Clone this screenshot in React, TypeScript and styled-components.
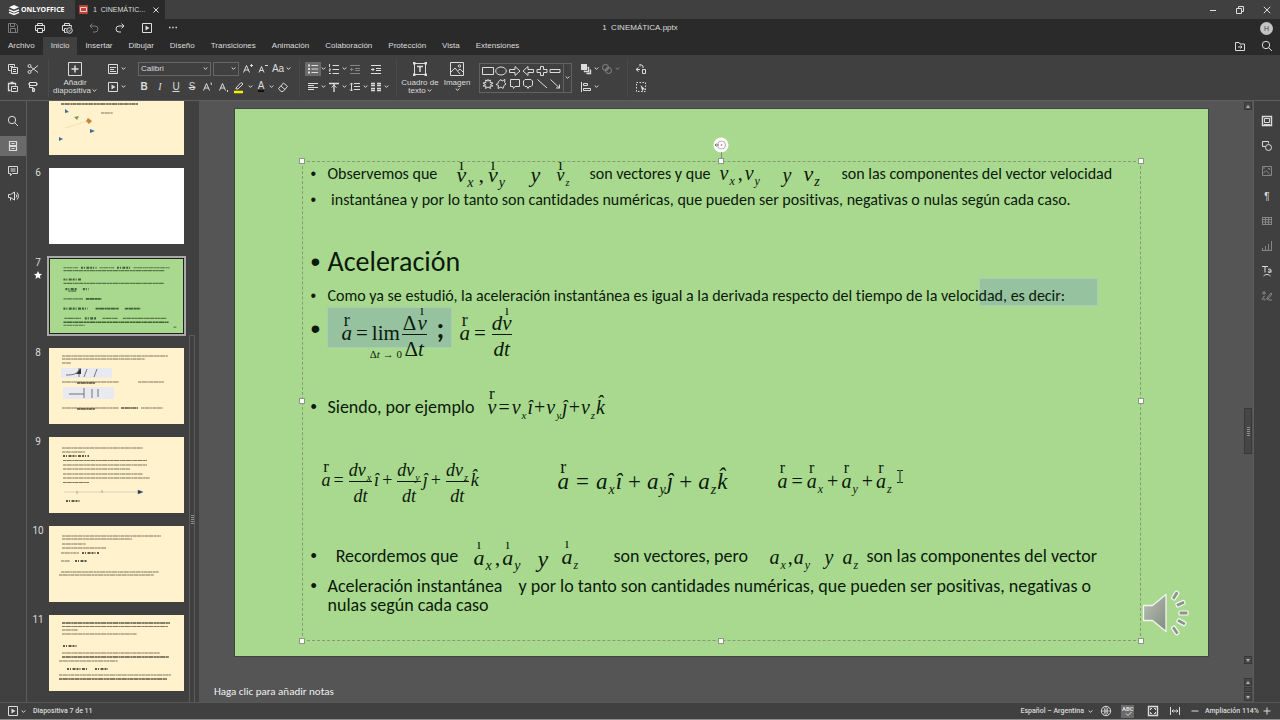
import React from 'react';
import styled, { createGlobalStyle, css } from 'styled-components';

const GlobalStyle = createGlobalStyle`
  *, *::before, *::after { box-sizing: border-box; }
  html, body, #root { height: 100%; }
  body {
    margin: 0;
    background: #404040;
    color: #dcdcdc;
    font-family: 'Liberation Sans', Arial, sans-serif;
    font-size: 8px;
    line-height: 8px;
    overflow: hidden;
  }
  button, select, input { font: inherit; color: inherit; }
  ul, ol { list-style: none; margin: 0; padding: 0; }
`;

const SLIDE_FONT = "Carlito, Lato, sans-serif";
const MATH_FONT = "'Liberation Serif', 'Times New Roman', serif";

/* ---------- icons ---------- */

const Svg = styled.svg<{ $dim?: boolean }>`
  display: block;
  flex: none;
  fill: none;
  stroke: currentColor;
  opacity: ${p => (p.$dim ? 0.45 : 1)};
`;

type IconProps = { size?: number; dim?: boolean; children: React.ReactNode };
const Icon = ({ size = 12, dim, children }: IconProps) => (
  <Svg width={size} height={size} viewBox={`0 0 ${size} ${size}`} $dim={dim} aria-hidden="true">
    {children}
  </Svg>
);

const Chevron = ({ dim }: { dim?: boolean }) => (
  <Svg width="5" height="5" viewBox="0 0 5 5" $dim={dim} aria-hidden="true">
    <path d="M.7 1.5 2.5 3.3 4.3 1.5" />
  </Svg>
);

const icons = {
  logo: (
    <Icon>
      <path d="M1 3.2 6 1l5 2.2L6 5.4z" fill="currentColor" stroke="none" />
      <path d="m1 5.8 5 2.2 5-2.2M1 8.3l5 2.2 5-2.2" strokeWidth="1.4" />
    </Icon>
  ),
  save: <Icon dim><path d="M1.5 1.5h7l2 2v7h-9zM3.5 1.5v3h4v-3M3.5 10.5v-4h5v4" /></Icon>,
  print: <Icon><path d="M3.5 3.5v-2h5v2M3.5 8.5h-2v-5h9v5h-2M3.5 6.5h5v4h-5z" /></Icon>,
  quickPrint: (
    <Icon>
      <path d="M3.5 3.5v-2h5v2M3.5 8.5h-2v-5h9v2M3.5 6.5h2M3.5 6.5v4h2" />
      <circle cx="8.5" cy="8.5" r="2.8" />
      <path d="m7.2 8.5 1 1 1.7-2" />
    </Icon>
  ),
  undo: <Icon dim><path d="M4.5 1.5 2 4l2.5 2.5M2 4h5a3 3 0 0 1 0 6H5" /></Icon>,
  redo: <Icon><path d="M7.5 1.5 10 4 7.5 6.5M10 4H5a3 3 0 0 0 0 6h2" /></Icon>,
  play: <Icon><path d="M1.5 1.5h9v9h-9z" /><path d="m4.5 3.5 4 2.5-4 2.5z" fill="currentColor" stroke="none" /></Icon>,
  more: <Icon><path d="M2 5.5h1.5M5.2 5.5h1.5M8.5 5.5H10" strokeWidth="1.5" /></Icon>,
  copy: <Icon><path d="M3.5 7.5h-2v-6h6v2M3 3.5h3" /><path d="M4.5 4.5h6v6h-6zM6 6.5h3M6 8.5h3" /></Icon>,
  paste: <Icon><path d="M3.5 9.5h-2v-7h7v2M3.5 1.5h3" strokeWidth="1.3" /><path d="M4.5 5.5h6v5h-6zM6 7.5h3" /></Icon>,
  cut: <Icon><circle cx="2.5" cy="3" r="1.5" /><circle cx="2.5" cy="9" r="1.5" /><path d="M4 4 11 9.5M4 8l7-5.5" /></Icon>,
  brush: <Icon><path d="M2.5 1.5h7v3h-7zM9.5 3h1.5M1 3h1.5v3.5H6v4" /><path d="M5.5 7.5h2v3h-2z" /></Icon>,
  addSlide: <Icon size={16}><path d="M1.5 1.5h13v13h-13z" /><path d="M8 4.5v7M4.5 8h7" strokeWidth="1.5" /></Icon>,
  layout: <Icon><path d="M1.5 1.5h9v9h-9zM3 4.5h6M3 6.5h4M3 8.5h6" /></Icon>,
  grow: <Icon><path d="m1.5 9.5 3-7 3 7M2.5 7h4M9.5 1v3M8 2.5h3" /></Icon>,
  shrink: <Icon><path d="m2 9.5 2.5-6 2.5 6M3 7.5h3M8 2.5h3" /></Icon>,
  sup: <Icon><path d="m1.5 9.5 3-7 3 7M2.5 7h4M9 1.5l.5 2.5" /></Icon>,
  sub: <Icon><path d="m1.5 9.5 3-7 3 7M2.5 7h4M9.5 9v2" /></Icon>,
  eraser: <Icon><path d="M1.5 7.5 6.5 2l4 3.5-4.5 5H4zM4 5l4 3.5" /></Icon>,
  pen: <Icon size={14}><path d="m3 8 5-5.5 2 1.5-5 5H3z" /><path d="M1 12h9" stroke="#f4f000" strokeWidth="2.5" /></Icon>,
  bullets: <Icon><path d="M1 2.5h2M1 6h2M1 9.5h2" strokeWidth="1.8" /><path d="M4.5 2.5H11M4.5 6H11M4.5 9.5H11" /></Icon>,
  numbers: <Icon><path d="M1.5 1v3M1 6h1.5L1 8h1.5M1 10.5h2M4.5 2.5H11M4.5 6.5H11M4.5 10.5H11" /></Icon>,
  outdent: <Icon dim><path d="M1 2.5h10M6 5.5h5M6 7.5h5M1 10.5h10M4.5 6.5h-3M3 5 1.5 6.5 3 8" /></Icon>,
  indent: <Icon><path d="M1 2.5h10M6 5.5h5M6 7.5h5M1 10.5h10M1 6.5h3M2.5 5 4 6.5 2.5 8" /></Icon>,
  alignLeft: <Icon><path d="M1 2.5h10M1 4.5h6M1 6.5h10M1 8.5h6" /></Icon>,
  alignTop: <Icon><path d="M1 2.5h10M6 3v8" strokeWidth="1.4" /><path d="M3.5 6.5 6 4.2l2.5 2.3" /></Icon>,
  spacing: <Icon><path d="M5 2.5h6M5 5.5h6M5 8.5h6M2.5 2v8M1 3.5 2.5 2 4 3.5M1 8.5 2.5 10 4 8.5" /></Icon>,
  columns: <Icon><path d="M1 2.5h4M1 4.5h4M7 2.5h4M7 4.5h4M1 7.5h4M1 9.5h4M7 7.5h4M7 9.5h4" strokeWidth="1.5" /></Icon>,
  textbox: (
    <Icon size={16}>
      <path d="M2.5 2.5h11v11h-11z" /><path d="M1 1h2.5v2.5H1zM12.5 1H15v2.5h-2.5zM1 12.5h2.5V15H1zM12.5 12.5H15V15h-2.5z" fill="currentColor" stroke="none" />
      <path d="M5 5.5h6M8 5.5V11" strokeWidth="1.5" />
    </Icon>
  ),
  image: <Icon size={16}><path d="M1.5 1.5h13v13h-13zM2 11l4-4 5 6M9 9.5l2-1.5 3.5 3.5" /><circle cx="10.5" cy="5" r="1.2" /></Icon>,
  arrange: <Icon><path d="M1 1h6v6H1z" fill="currentColor" stroke="none" /><path d="M7.5 4.5h1v4h-4v-1M10.5 6.5v4h-4" strokeWidth="1.4" /></Icon>,
  merge: <Icon dim><circle cx="4.5" cy="4.5" r="3" /><circle cx="7.5" cy="7.5" r="3" /><path d="m4.5 6 1.5 1.5M6 4.5 7.5 6" /></Icon>,
  alignObj: <Icon><path d="M1.5 1v10M3.5 2.5h4v2h-4zM3.5 7.5h7v2h-7z" /></Icon>,
  replace: <Icon><path d="M3.5 8.5 1 6.5l2.5-2M1.5 6.5H5M5.5 1.5 8 3v2M7.5 6.5h3v4h-3zM5 1v2.5" /></Icon>,
  select: <Icon><path d="M1.5 1.5h9v9h-9z" strokeDasharray="1.5 1.5" /><path d="m5.5 4 5 4.5H8L7.5 11z" fill="currentColor" stroke="none" /></Icon>,
  folder: <Icon><path d="M1.5 2.5H5L6 4h4.5v6.5h-9zM4 7h4M6.5 5.5 8 7 6.5 8.5" /></Icon>,
  search: <Icon><circle cx="5" cy="5" r="3.7" /><path d="M7.7 7.7 11 11" /></Icon>,
  slides: <Icon><path d="M2.5 1.5h7v4h-7zM2.5 6.5h7v4h-7zM4.5 3.5h3M4.5 8.5h3" strokeWidth="1.2" /></Icon>,
  comment: <Icon><path d="M1.5 1.5h9v7h-5l-2 2v-2h-2zM3.5 4h5M3.5 6h5" /></Icon>,
  speaker: <Icon><path d="M1.5 4.5h2L7.5 2v8L3.5 7.5h-2zM3.5 8v2.5M9 4.5a2 2 0 0 1 0 3M10 2.5a5 5 0 0 1 0 7" /></Icon>,
  slideSet: <Icon><path d="M1.5 1.5h9v9h-9z" strokeWidth="1.4" /><path d="M3.5 3.5h5v4h-5zM3 9.5h6" /></Icon>,
  shapeSet: <Icon><path d="M4.5 6.5h-3v-5h6v2" /><circle cx="7.5" cy="7.5" r="3" /></Icon>,
  imageSet: <Icon dim><path d="M1.5 1.5h9v9h-9zM2 8.5l3-3 4 4M7 3.5h1.5V5M2 3h2" /></Icon>,
  tableSet: <Icon dim><path d="M1 2.5h10M1 4.5h10M1 7h10M1 9.5h10M1.5 2v8M4.5 2v8M7.5 2v8M10.5 2v8" /></Icon>,
  chartSet: <Icon dim><path d="M1 10.5h10M1.5 8v2M4.5 6v4M7.5 4v6M10.5 1v9" /></Icon>,
  artSet: <Icon><path d="M1 1.5h6M4 1.5v6M7 4.5c1.5-1 3-.5 3 .5v2.5M10 6c-3-.5-3.5 1.5-2 1.5.8 0 1.5-.3 2-1M2.5 11c2-2 5-2 7 0" /></Icon>,
  signSet: <Icon dim><path d="M1 3h4M3 1v4M6 8l4-5 1 1-4 5zM1 10c1-3 2-3 2-1s1 1 2 0 2 1 3 1h3M2 7l2-1" /></Icon>,
  globe: <Icon><circle cx="6" cy="6" r="4.7" /><path d="M6 1.3v9.4M1.3 6h9.4M3.5 2.2c1.8 2 1.8 5.600 0 7.6M8.500 2.200c-1.800 2-1.800 5.600 0 7.600" strokeWidth=".8" /></Icon>,
  fitPage: <Icon><path d="M1.5 1.5h9v9h-9z" strokeWidth="1.4" /><path d="M3.5 5V3.5H5M7 3.5h1.5V5M8.5 7v1.5H7M5 8.5H3.5V7" /></Icon>,
  fitWidth: <Icon><path d="M1.5 2v8M10.5 2v8M3 6h6M4.5 4.5 3 6l1.5 1.5M7.5 4.5 9 6 7.5 7.5" /></Icon>,
  minus: <Icon size={8}><path d="M.5 4h7" /></Icon>,
  plus: <Icon size={8}><path d="M.5 4h7M4 .5v7" /></Icon>,
};

/* ---------- shared controls ---------- */

const IconButton = styled.button<{ $w?: number; $active?: boolean }>`
  display: flex;
  align-items: center;
  justify-content: center;
  flex: none;
  width: ${p => p.$w ?? 16}px;
  height: 14px;
  padding: 0;
  border: 0;
  background: ${p => (p.$active ? '#6a6a6a' : 'transparent')};
`;

const MenuArrow = styled(IconButton)`
  width: 5px;
`;

/* ---------- title bar ---------- */

const Shell = styled.div`
  display: flex;
  flex-direction: column;
  height: 100vh;
  border-bottom: 1px solid #8c8c8c;
`;

const TitleBar = styled.header`
  display: flex;
  align-items: stretch;
  flex: none;
  height: 19px;
  background: #404040;
`;

const Brand = styled.div`
  display: flex;
  align-items: center;
  gap: 1px;
  width: 75px;
  padding-left: 8px;
  color: #fff;
  font: 700 7px/8px 'Open Sans', sans-serif;
`;

const FileTab = styled.div`
  display: flex;
  align-items: center;
  min-width: 90px;
  padding-left: 4px;
  background: #2a2a2a;
`;

const FileTabName = styled.span`
  flex: 1;
  margin-left: 5px;
  font-size: 7px;
  white-space: pre;
`;

const WindowButtons = styled.div`
  display: flex;
  align-items: center;
  margin-left: auto;
`;

const Header = styled.div`
  flex: none;
  background: #2a2a2a;
`;

const QuickBar = styled.div`
  display: grid;
  grid-template-columns: 1fr auto 1fr;
  align-items: center;
  height: 18px;
`;

const QuickTools = styled.div`
  display: flex;
`;

const DocTitle = styled.h1`
  margin: 0;
  font: inherit;
  white-space: pre;
`;

const Avatar = styled.button`
  justify-self: end;
  width: 13px;
  height: 13px;
  margin-right: 7px;
  padding: 0;
  border: 0;
  border-radius: 50%;
  background: #c4c4c4;
  color: #444;
  font-size: 7px;
  line-height: 13px;
`;

const Tabs = styled.nav`
  display: flex;
  height: 18px;
`;

const Tab = styled.button<{ $active?: boolean }>`
  height: 18px;
  padding: 0 8px;
  border: 0;
  background: ${p => (p.$active ? '#404040' : 'transparent')};
`;

const TabsRight = styled.div`
  display: flex;
  align-items: center;
  margin-left: auto;
`;

/* ---------- ribbon ---------- */

const Ribbon = styled.div`
  display: flex;
  align-items: center;
  flex: none;
  height: 46px;
  padding-left: 5px;
  border-bottom: 1px solid #5e5e5e;
  background: #404040;
`;

const ToolGroup = styled.div<{ $ml?: number }>`
  display: flex;
  flex-direction: column;
  gap: 4px;
  margin-left: ${p => p.$ml ?? 0}px;
`;

const ToolRow = styled.div<{ $gap?: number; $indent?: number }>`
  display: flex;
  align-items: center;
  gap: ${p => p.$gap ?? 0}px;
  padding-left: ${p => p.$indent ?? 0}px;
`;

const Divider = styled.span`
  width: 1px;
  height: 38px;
  margin: 0 5px 0 7px;
  background: #4a4a4a;
`;

const BigButton = styled.button<{ $w: number }>`
  display: flex;
  flex-direction: column;
  align-items: center;
  gap: 2px;
  width: ${p => p.$w}px;
  height: 36px;
  padding: 1px 0 0;
  border: 0;
  background: none;
  white-space: nowrap;
`;

const BigLabel = styled.span`
  display: flex;
  flex-direction: column;
  align-items: center;
`;

const LabelLine = styled.span`
  display: flex;
  align-items: center;
  gap: 1px;
`;

const SelectWrap = styled.label<{ $w: number }>`
  display: flex;
  align-items: center;
  width: ${p => p.$w}px;
  height: 14px;
  margin-right: 2px;
  padding-right: 2px;
  border: 1px solid #666;
  & + & { margin-right: 1px; }
`;

const Select = styled.select`
  flex: 1;
  min-width: 0;
  height: 12px;
  padding: 0 2px;
  border: 0;
  background: none;
  appearance: none;
`;

const Letter = styled.span<{ $kind?: 'b' | 'i' | 'u' | 's' | 'color' }>`
  font-size: 10px;
  line-height: 11px;
  ${p => p.$kind === 'b' && css`font-weight: 700;`}
  ${p => p.$kind === 'i' && css`font-family: 'Liberation Serif', serif; font-style: italic;`}
  ${p => p.$kind === 'u' && css`text-decoration: underline;`}
  ${p => p.$kind === 's' && css`text-decoration: line-through;`}
  ${p => p.$kind === 'color' && css`border-bottom: 2px solid #111; line-height: 9px;`}
`;

const ShapeBox = styled.div`
  display: flex;
  width: 93px;
  height: 30px;
  border: 1px solid #626262;
`;

const ShapeGrid = styled.div`
  display: grid;
  flex: 1;
  grid-template-columns: repeat(6, 1fr);
  align-items: center;
  justify-items: center;
  padding: 1px;
`;

const ShapeMore = styled(IconButton)`
  width: 8px;
  height: 28px;
  border-left: 1px solid #626262;
`;

const shapes = [
  'M.5 2.5h11v7H.5z',
  'M6 2a5.3 4 0 1 1 0 8 5.3 4 0 1 1 0-8z',
  'M.5 4.5H6v-3L11 6l-5 4.5v-3H.5z',
  'M11.5 4.5H6v-3L1 6l5 4.5v-3h5.5z',
  'M4.5 1.5h3v3H11v3H7.5v3h-3v-3H1v-3h3.5z',
  'M1 4.5h10v3H1z',
  'M6 1v2l2.5-1L8 4.5l3 .5-2.5 1.5L11 8 8 8l.5 2.5L6 9l-2.5 1.5L4 8 1 8l2.5-1.500L1 5l3-.5L3.5 2 6 3',
  'M3.5 3.5 6 1.5l1 1.5 3-1.500-.5 3L11 6l-2 1.500-1 3-2-1.500-3 1.500.5-3L1 6.500l2-1z',
  'M1.5 1.5h9v7H6L4.5 10.5 4 8.5H1.5z',
  'M3 1.5h6L10.5 3v4L9 8.5H7L6 10.5 5 8.5H3L1.5 7V3z',
  'M1.5 1.5 11 10',
  'M1.5 1.5 10.5 10M10.5 6.5V10H7',
];

const FontTools = () => (
  <ToolGroup $ml={10}>
    <ToolRow $indent={2}>
      <SelectWrap $w={73}>
        <Select aria-label="Fuente" defaultValue="Calibri"><option>Calibri</option></Select>
        <Chevron />
      </SelectWrap>
      <SelectWrap $w={26}>
        <Select aria-label="Tamaño de fuente" defaultValue=""><option value="" /></Select>
        <Chevron />
      </SelectWrap>
      <IconButton aria-label="Aumentar fuente">{icons.grow}</IconButton>
      <IconButton $w={14} aria-label="Reducir fuente">{icons.shrink}</IconButton>
      <IconButton aria-label="Cambiar mayúsculas"><Letter>Aa</Letter></IconButton>
      <MenuArrow aria-label="Opciones de mayúsculas"><Chevron /></MenuArrow>
    </ToolRow>
    <ToolRow>
      <IconButton><Letter $kind="b">B</Letter></IconButton>
      <IconButton><Letter $kind="i">I</Letter></IconButton>
      <IconButton><Letter $kind="u">U</Letter></IconButton>
      <IconButton><Letter $kind="s">S</Letter></IconButton>
      <IconButton aria-label="Superíndice">{icons.sup}</IconButton>
      <IconButton aria-label="Subíndice">{icons.sub}</IconButton>
      <IconButton aria-label="Color de resaltado">{icons.pen}</IconButton>
      <MenuArrow aria-label="Opciones de resaltado"><Chevron /></MenuArrow>
      <IconButton aria-label="Color de fuente"><Letter $kind="color">A</Letter></IconButton>
      <MenuArrow aria-label="Opciones de color"><Chevron /></MenuArrow>
      <IconButton $w={18} aria-label="Borrar estilo">{icons.eraser}</IconButton>
    </ToolRow>
  </ToolGroup>
);

type ToolDef = { name: string; icon: React.ReactNode; arrow?: boolean; active?: boolean; dim?: boolean };
const ToolLine = ({ tools }: { tools: ToolDef[] }) => (
  <ToolRow>
    {tools.map(t => (
      <React.Fragment key={t.name}>
        <IconButton aria-label={t.name} $active={t.active}>{t.icon}</IconButton>
        <MenuArrow aria-label={`${t.name}: opciones`}>{t.arrow && <Chevron dim={t.dim} />}</MenuArrow>
      </React.Fragment>
    ))}
  </ToolRow>
);

/* ---------- side rails and thumbnails ---------- */

const Body = styled.div`
  display: flex;
  flex: 1;
  min-height: 0;
`;

const Rail = styled.aside<{ $right?: boolean }>`
  display: flex;
  flex: none;
  flex-direction: column;
  gap: 5px;
  width: 27px;
  padding-top: 10px;
  border: 0 solid #5c5c5c;
  border-width: ${p => (p.$right ? '0 0 0 1px' : '0 1px 0 0')};
`;

const RailButton = styled(IconButton)`
  width: 26px;
  height: 20px;
`;

const ThumbPanel = styled.div`
  display: flex;
  flex: none;
  width: 172px;
`;

const ThumbList = styled.ol`
  display: flex;
  flex: 1;
  flex-direction: column;
  justify-content: flex-end;
  gap: 13px;
  min-height: 0;
  padding-bottom: 11px;
  overflow: hidden;
`;

const ThumbItem = styled.li<{ $selected?: boolean }>`
  display: flex;
  flex: none;
  margin: ${p => (p.$selected ? '1px 0' : '0')};
`;

const ThumbNumber = styled.span`
  display: flex;
  flex-direction: column;
  align-items: center;
  gap: 3px;
  width: 22px;
  font: 10px/10px Roboto, sans-serif;
`;

const Thumb = styled.button<{ $bg: string; $selected?: boolean }>`
  display: block;
  width: 135px;
  height: 76px;
  padding: 0;
  border: ${p => (p.$selected ? '1px solid #222' : '0')};
  outline: ${p => (p.$selected ? '2px solid #a9a9a9' : 'none')};
  background: ${p => p.$bg};
`;

const Mini = styled.svg`
  display: block;
  width: 100%;
  height: 100%;
`;

const Splitter = styled.div`
  display: flex;
  flex-direction: column;
  justify-content: flex-end;
  width: 9px;
  margin-right: 1px;
`;

const SplitThumb = styled.div`
  display: flex;
  align-items: center;
  justify-content: center;
  width: 6px;
  height: 61%;
  border: 1px solid #5c5c5c;
  border-bottom: 0;
`;

const Grip = styled.span`
  width: 3px;
  height: 9px;
  background: repeating-linear-gradient(#909090 0 1px, transparent 1px 2px);
`;

type Line = [number, number, number, number?];
type Slide = { n: number; label?: string; bg: string; lines: Line[]; extra?: React.ReactNode };

const cream = '#fff2cc';
const green = '#a9d98f';

const slidesData: Slide[] = [
  {
    n: 5, bg: cream, lines: [[12, 25, 77, 1.5], [52, 34, 12, 1]],
    extra: (
      <>
        <path d="M16 49 42 41" stroke="#e6d3a4" strokeWidth=".6" />
        <path d="m16 30 4 3-4 1zM41 50l5 2-5 2zM10 58l4 2-4 2z" fill="#3f6b9a" />
        <path d="m25 38 5-1-2 4z" fill="#7b9a55" /><path d="m39 39 4 3-3 3-3-3z" fill="#c98334" />
      </>
    ),
  },
  { n: 6, label: '6', bg: '#ffffff', lines: [] },
  {
    n: 7, label: '7', bg: green,
    lines: [
      [13, 9, 15], [31, 9, 16, 2], [50, 9, 15], [68, 9, 14, 2], [85, 9, 37], [13, 12, 104], [13, 21, 19, 2], [13, 25, 103],
      [15, 31, 12, 2], [33, 31, 6, 2], [18, 33, 8, 1], [13, 41, 20], [36, 41, 16, 1.5],
      [13, 51, 25, 2], [46, 51, 24, 1.5], [76, 51, 16, 1.5], [14, 61, 17], [35, 61, 12, 2], [53, 61, 16], [74, 61, 45], [13, 65, 108, 1.5], [13, 68, 22], [126, 70, 3],
    ],
  },
  {
    n: 8, label: '8', bg: cream,
    lines: [[13, 8, 106], [13, 11, 83], [13, 15, 9], [13, 34, 57], [89, 34, 26], [13, 60, 57], [72, 60, 17, 1.5], [92, 60, 22], [28, 35, 18, 1.5], [28, 61, 18, 1.5]],
    extra: (
      <>
        <path d="M12 20h51v10H12zM14 39h51v12H14z" fill="#e9eaf0" />
        <path d="M17 27c8 0 11-1 14-6M30 20v9M38 21l-3 8M48 21l-3 8M20 46h15M35 40v10M43 41v9M49 41v8" stroke="#555" strokeWidth=".8" fill="none" />
        <path d="m27 26 5-6v6z" fill="#333" />
      </>
    ),
  },
  {
    n: 9, label: '9', bg: cream,
    lines: [[13, 11, 81], [13, 15, 23], [14, 19, 26, 1.8], [14, 23.5, 84], [14, 28, 84], [14, 32, 67], [14, 37, 80], [14, 41, 87], [14, 45.5, 26], [17, 64, 15, 2]],
    extra: <><path d="M15 55h74" stroke="#c8bfa8" strokeWidth=".6" /><path d="m89 53 5 2-5 2zM28 54v3M53 53v3" fill="#203a66" stroke="#666" strokeWidth=".5" /></>,
  },
  {
    n: 10, label: '10', bg: cream,
    lines: [[13, 10, 99], [13, 13, 70], [13, 18, 24], [13, 22, 44], [12, 27, 18], [33, 27, 17, 2], [12, 35, 9], [26, 35, 12, 2], [12, 46, 98], [10, 49, 95]],
  },
  {
    n: 11, label: '11', bg: cream,
    lines: [[13, 8, 108, 1.5], [13, 11.5, 106], [13, 15, 16], [13, 19, 75], [14, 31, 14, 2], [13, 38, 98], [13, 42, 107, 1.5], [10, 46, 59], [18, 54, 20, 2], [46, 54, 13, 2], [10, 60, 112], [10, 64, 108, 1.5]],
  },
];

const MiniSlide = ({ slide }: { slide: Slide }) => (
  <Mini viewBox="0 0 135 76" aria-hidden="true">
    {slide.extra}
    {slide.lines.map(([x, y, w, t = 1], i) => (
      <path key={i} d={`M${x} ${y}h${w}`} stroke={slide.n === 7 ? '#1d3a18' : '#2b2619'} strokeWidth={t + 0.2}
        strokeDasharray={t > 1.6 ? '2 1 1 1.5 3 1' : '3.3 .4 5.1 .5 2.2 .3'} opacity={t > 1 ? 0.75 : 0.6} />
    ))}
  </Mini>
);

/* ---------- canvas ---------- */

const Workspace = styled.main`
  display: flex;
  flex: 1;
  flex-direction: column;
  min-width: 0;
  background: #555;
`;

const Row = styled.div<{ $grow?: boolean }>`
  display: flex;
  flex: ${p => (p.$grow ? '1' : 'none')};
  min-height: 0;
`;

const Stage = styled.div`
  display: flex;
  flex: 1;
  align-items: flex-start;
  justify-content: center;
  min-width: 0;
  padding-top: 8px;
  overflow: hidden;
`;

const SlideCanvas = styled.article`
  position: relative;
  flex: none;
  width: 973px;
  height: 547px;
  background: ${green};
  box-shadow: 0 0 0 1px #444;
  color: #0b1a0b;
  font-family: ${SLIDE_FONT};
  font-variant-ligatures: none;
`;

const TextBox = styled.ul`
  position: absolute;
  left: 67px;
  top: 52px;
  width: 839px;
  height: 480px;
  padding-left: 8px;
  border: 1px dashed #7f9f72;
`;

const Para = styled.li<{ $h: number; $size?: number }>`
  display: flex;
  align-items: center;
  height: ${p => p.$h}px;
  font-size: ${p => p.$size ?? 16}px;
  line-height: 20px;
  white-space: pre;
  &::before {
    content: '•';
    flex: none;
    width: 17px;
    font-family: 'Liberation Sans', sans-serif;
  }
`;

const Continuation = styled.li`
  padding-left: 17px;
  font-size: 18px;
  line-height: 19px;
`;

const Spacer = styled.li<{ $h: number }>`
  height: ${p => p.$h}px;
`;

const Segment = styled.span<{ $w?: number }>`
  flex: none;
  width: ${p => (p.$w ? `${p.$w}px` : 'auto')};
`;

const Selection = styled.div<{ $x: number; $y: number; $w: number; $h: number }>`
  position: absolute;
  left: ${p => p.$x}px;
  top: ${p => p.$y}px;
  width: ${p => p.$w}px;
  height: ${p => p.$h}px;
  border: 1px solid #a3cfb2;
  background: #96c2a0;
`;

const Handle = styled.span<{ $x: number; $y: number }>`
  position: absolute;
  left: ${p => p.$x - 3}px;
  top: ${p => p.$y - 3}px;
  width: 6px;
  height: 6px;
  border: 1px solid #8a9a86;
  background: #fff;
`;

const Overlay = styled.svg<{ $x: number; $y: number }>`
  position: absolute;
  left: ${p => p.$x}px;
  top: ${p => p.$y}px;
`;

/* equations are free objects on the slide */
const Eq = styled.div<{ $x: number; $y: number; $size?: number }>`
  position: absolute;
  left: ${p => p.$x}px;
  top: ${p => p.$y}px;
  display: flex;
  align-items: center;
  height: 24px;
  font: italic ${p => p.$size ?? 20}px/20px ${MATH_FONT};
  white-space: pre;
`;

const Op = styled.span<{ $p?: number }>`
  padding: 0 ${p => p.$p ?? 2}px;
  font-style: normal;
`;

const Sub = styled.sub<{ $size?: number }>`
  padding: 16px 1px 0;
  font-size: ${p => p.$size ?? 12}px;
  line-height: 12px;
`;

const Accented = styled.span`
  position: relative;
`;

const Accent = styled.span<{ $lift: number; $size: number }>`
  position: absolute;
  left: -8px;
  right: -8px;
  bottom: ${p => p.$lift}px;
  font-size: ${p => p.$size}px;
  font-style: normal;
  line-height: 16px;
  text-align: center;
`;

const Fraction = styled.span`
  display: flex;
  flex-direction: column;
  align-items: center;
  margin: 4px 2px 0;
`;

const Numer = styled.span`
  display: flex;
  align-items: center;
  justify-content: center;
  align-self: stretch;
  height: 24px;
  border-bottom: 1px solid currentColor;
`;

const Denom = styled.span`
  height: 24px;
  line-height: 28px;
`;

const Vec = ({ c, mark = 'r', lift = 15, size = 18 }: { c: string; mark?: string; lift?: number; size?: number }) => (
  <Accented>{c}<Accent $lift={lift} $size={size}>{mark}</Accent></Accented>
);
const DvDt = ({ s }: { s: string }) => (
  <Fraction><Numer>dv<Sub $size={10}>{s}</Sub></Numer><Denom>dt</Denom></Fraction>
);

const iHat = 'î';
const jHat = 'ĵ';
const kHat = 'k\u0302';

const Equations = () => (
  <>
    <Eq $x={222} $y={54} $size={22}>
      <Vec c="v" mark="ı" lift={12} size={16} /><Sub $size={14}>x</Sub><Op $p={4}>,</Op>
      <Vec c="v" mark="ı" lift={12} size={16} /><Sub $size={14}>y</Sub>
    </Eq>
    <Eq $x={296} $y={54} $size={22}>y</Eq>
    <Eq $x={322} $y={54} $size={18}><Vec c="v" mark="ı" lift={12} size={16} /><Sub $size={10}>z</Sub></Eq>
    <Eq $x={485} $y={52}>v<Sub>x</Sub><Op>,</Op>v<Sub>y</Sub></Eq>
    <Eq $x={548} $y={54}>y</Eq>
    <Eq $x={569} $y={53} $size={22}>v<Sub $size={14}>z</Sub></Eq>

    <Eq $x={107} $y={212} $size={21}>
      <Vec c="a" lift={15} /><Op $p={4}>=</Op>
      <Accented>
        <Op $p={0}>lim</Op>
        <Accent $lift={-19} $size={11}>Δ<i>t</i> → 0</Accent>
      </Accented>
      <Fraction><Numer><Op $p={1}>Δ</Op><Vec c="v" mark="ı" lift={14} size={14} /></Numer><Denom><Op $p={0}>Δ</Op>t</Denom></Fraction>
    </Eq>
    <Eq $x={225} $y={212} $size={21}>
      <Vec c="a" lift={15} /><Op $p={4}>=</Op>
      <Fraction><Numer>d<Vec c="v" mark="ı" lift={14} size={14} /></Numer><Denom>dt</Denom></Fraction>
    </Eq>

    <Eq $x={253} $y={286}>
      <Vec c="v" size={17} /><Op>=</Op>v<Sub $size={11}>x</Sub>{iHat}<Op $p={1}>+</Op>v<Sub $size={11}>y</Sub>{jHat}<Op $p={1}>+</Op>v<Sub $size={11}>z</Sub>{kHat}
    </Eq>

    <Eq $x={87} $y={359} $size={18}>
      <Vec c="a" size={17} /><Op $p={3}>=</Op><DvDt s="x" />{iHat}<Op $p={3}>+</Op><DvDt s="y" />{jHat}<Op $p={3}>+</Op><DvDt s="z" />{kHat}
    </Eq>
    <Eq $x={323} $y={361} $size={23}>
      <Vec c="a" lift={17} /><Op $p={7}>=</Op>a<Sub $size={14}>x</Sub>{iHat}<Op $p={6}>+</Op>a<Sub $size={14}>y</Sub>{jHat}<Op $p={6}>+</Op>a<Sub $size={14}>z</Sub>{kHat}
    </Eq>
    <Eq $x={543} $y={360}>
      <Vec c="a" size={16} /><Op $p={4}>=</Op><Vec c="a" size={16} /><Sub>x</Sub><Op $p={3}>+</Op><Vec c="a" size={16} /><Sub>y</Sub><Op $p={3}>+</Op><Vec c="a" size={16} /><Sub>z</Sub>
    </Eq>

    <Eq $x={239} $y={437} $size={22}>
      <Vec c="a" mark="ı" size={14} /><Sub $size={14}>x</Sub><Op>,</Op><Vec c="a" mark="ı" size={14} /><Sub $size={14}>y</Sub>
    </Eq>
    <Eq $x={303} $y={438} $size={24}>y</Eq>
    <Eq $x={327} $y={436} $size={22}><Vec c="a" mark="ı" size={14} /><Sub>z</Sub></Eq>
    <Eq $x={535} $y={436}>a<Sub>x</Sub><Op $p={1}>,</Op>a<Sub>y</Sub></Eq>
    <Eq $x={590} $y={436}>y</Eq>
    <Eq $x={608} $y={436}>a<Sub>z</Sub></Eq>
  </>
);

const SpeakerGraphic = () => (
  <Overlay $x={906} $y={480} width="50" height="50" viewBox="0 0 50 50" aria-label="Audio">
    <defs>
      <linearGradient id="cone" x1="0" x2="1" y1="0" y2="1">
        <stop offset="0" stopColor="#b9c0b6" /><stop offset="1" stopColor="#848c82" />
      </linearGradient>
    </defs>
    <path d="M2.5 16.5h9L25 5.5v37L11.5 31.5h-9z" fill="url(#cone)" stroke="#f2f6f0" strokeWidth="1.3" strokeLinejoin="round" />
    <g fill="#8c9488" stroke="#f5f8f3" strokeWidth="1.2">
      {[[34, 7, -58], [39, 15, -24], [42, 24, 0], [40, 33, 28], [34, 41, 55]].map(([x, y, r]) => (
        <rect key={r} x={x - 4} y={y - 2} width="9" height="4" rx="1" transform={`rotate(${r} ${x} ${y})`} />
      ))}
    </g>
  </Overlay>
);

const ScrollBar = styled.div`
  display: flex;
  flex: none;
  flex-direction: column;
  align-items: center;
  justify-content: space-between;
  width: 10px;
  padding: 1px 0;
`;

const ScrollButton = styled.button`
  display: flex;
  align-items: center;
  justify-content: center;
  width: 8px;
  height: 8px;
  padding: 0;
  border: 1px solid #383838;
  background: #484848;
  color: #b0b0b0;
`;

const ScrollThumb = styled.div<{ $h: number }>`
  display: flex;
  align-items: center;
  justify-content: center;
  width: 8px;
  height: ${p => p.$h}px;
  margin-top: ${p => (p.$h > 10 ? 96 : 0)}px;
  border: 1px solid #383838;
  background: #464646;
`;

const ScrollFoot = styled.div`
  padding-bottom: 12px;
`;

const Tri = ({ down }: { down?: boolean }) => (
  <svg width="4" height="3" viewBox="0 0 4 3" aria-hidden="true">
    <path d={down ? 'M0 0h4L2 3z' : 'M0 3h4L2 0z'} fill="currentColor" />
  </svg>
);

const Notes = styled.div`
  flex: 1;
  height: 25px;
  padding: 9px 15px 0;
  color: #f0f0f0;
  font: 11px/11px ${SLIDE_FONT};
`;

/* ---------- status bar ---------- */

const StatusBar = styled.footer`
  display: flex;
  align-items: center;
  flex: none;
  height: 17px;
  padding: 0 5px;
  border-top: 1px solid #585858;
  font: 500 7px/8px Roboto, sans-serif;
`;

const StatusText = styled.span<{ $ml?: number }>`
  margin-left: ${p => p.$ml ?? 0}px;
  white-space: nowrap;
`;

const LanguageButton = styled.button`
  display: flex;
  align-items: center;
  gap: 4px;
  margin: 0 5px 0 auto;
  padding: 0;
  border: 0;
  background: none;
`;

const SpellBadge = styled.span`
  display: flex;
  flex-direction: column;
  align-items: center;
  width: 13px;
  height: 13px;
  padding-top: 1px;
  background: #6a6a6a;
  font-size: 6px;
  font-weight: 700;
  line-height: 6px;
`;

const tabNames = ['Archivo', 'Inicio', 'Insertar', 'Dibujar', 'Diseño', 'Transiciones', 'Animación', 'Colaboración', 'Protección', 'Vista', 'Extensiones'];

const handles = [[67, 52], [486, 52], [906, 52], [67, 292], [906, 292], [67, 532], [486, 532], [906, 532]];

export default function App() {
  return (
    <Shell>
      <GlobalStyle />
      <TitleBar>
        <Brand>{icons.logo}ONLYOFFICE</Brand>
        <FileTab>
          <svg width="9" height="9" viewBox="0 0 9 9" aria-hidden="true">
            <rect width="9" height="9" rx="1" fill="#b8433a" /><path d="M1.5 2.5h6v4h-6z" fill="none" stroke="#f6cfc8" />
          </svg>
          <FileTabName>1  CINEMÁTIC...</FileTabName>
          <IconButton $w={18} aria-label="Cerrar pestaña"><Icon size={6}><path d="m.5.5 5 5M5.5.5l-5 5" /></Icon></IconButton>
        </FileTab>
        <WindowButtons>
          <IconButton $w={27} aria-label="Minimizar"><Icon size={8}><path d="M1 4.5h6" /></Icon></IconButton>
          <IconButton $w={27} aria-label="Restaurar"><Icon size={8}><path d="M.5 2.5h5v5h-5zM2.5 2.5v-2h5v5h-2" /></Icon></IconButton>
          <IconButton $w={27} aria-label="Cerrar"><Icon size={8}><path d="m.8.8 6.4 6.4M7.2.8.8 7.2" /></Icon></IconButton>
        </WindowButtons>
      </TitleBar>

      <Header>
        <QuickBar>
          <QuickTools>
            <IconButton $w={26} aria-label="Guardar">{icons.save}</IconButton>
            <IconButton $w={27} aria-label="Imprimir">{icons.print}</IconButton>
            <IconButton $w={27} aria-label="Impresión rápida">{icons.quickPrint}</IconButton>
            <IconButton $w={27} aria-label="Deshacer">{icons.undo}</IconButton>
            <IconButton $w={26} aria-label="Rehacer">{icons.redo}</IconButton>
            <IconButton $w={27} aria-label="Iniciar presentación">{icons.play}</IconButton>
            <IconButton $w={26} aria-label="Más">{icons.more}</IconButton>
          </QuickTools>
          <DocTitle>1  CINEMÁTICA.pptx</DocTitle>
          <Avatar>H</Avatar>
        </QuickBar>
        <Tabs>
          {tabNames.map(name => <Tab key={name} $active={name === 'Inicio'}>{name}</Tab>)}
          <TabsRight>
            <IconButton $w={27} aria-label="Abrir ubicación">{icons.folder}</IconButton>
            <IconButton $w={27} aria-label="Buscar">{icons.search}</IconButton>
          </TabsRight>
        </Tabs>
      </Header>

      <Ribbon>
        <ToolGroup>
          <ToolRow $gap={4}>
            <IconButton aria-label="Copiar">{icons.copy}</IconButton>
            <IconButton aria-label="Cortar">{icons.cut}</IconButton>
          </ToolRow>
          <ToolRow $gap={4}>
            <IconButton aria-label="Pegar">{icons.paste}</IconButton>
            <IconButton aria-label="Copiar estilo">{icons.brush}</IconButton>
          </ToolRow>
        </ToolGroup>
        <Divider />
        <BigButton $w={42}>
          {icons.addSlide}
          <BigLabel><span>Añadir</span><LabelLine>diapositiva<Chevron /></LabelLine></BigLabel>
        </BigButton>
        <ToolGroup $ml={9}>
          <ToolLine tools={[{ name: 'Diseño de diapositiva', icon: icons.layout, arrow: true }]} />
          <ToolLine tools={[{ name: 'Presentación', icon: icons.play, arrow: true }]} />
        </ToolGroup>
        <FontTools />
        <Divider />
        <ToolGroup>
          <ToolLine tools={[
            { name: 'Viñetas', icon: icons.bullets, arrow: true, active: true },
            { name: 'Numeración', icon: icons.numbers, arrow: true },
            { name: 'Reducir sangría', icon: icons.outdent },
            { name: 'Aumentar sangría', icon: icons.indent },
          ]} />
          <ToolLine tools={[
            { name: 'Alineación horizontal', icon: icons.alignLeft, arrow: true },
            { name: 'Alineación vertical', icon: icons.alignTop, arrow: true },
            { name: 'Interlineado', icon: icons.spacing, arrow: true },
            { name: 'Columnas', icon: icons.columns, arrow: true },
          ]} />
        </ToolGroup>
        <Divider />
        <BigButton $w={36}>
          {icons.textbox}
          <BigLabel><span>Cuadro de</span><LabelLine>texto<Chevron /></LabelLine></BigLabel>
        </BigButton>
        <BigButton $w={38}>
          {icons.image}
          <BigLabel><span>Imagen</span><Chevron /></BigLabel>
        </BigButton>
        <ToolGroup $ml={3}>
          <ShapeBox>
            <ShapeGrid>{shapes.map(d => <Icon key={d}><path d={d} /></Icon>)}</ShapeGrid>
            <ShapeMore aria-label="Más formas"><Chevron /></ShapeMore>
          </ShapeBox>
        </ToolGroup>
        <ToolGroup $ml={6}>
          <ToolLine tools={[
            { name: 'Organizar', icon: icons.arrange, arrow: true },
            { name: 'Combinar formas', icon: icons.merge, arrow: true, dim: true },
          ]} />
          <ToolLine tools={[{ name: 'Alinear formas', icon: icons.alignObj, arrow: true }]} />
        </ToolGroup>
        <Divider />
        <ToolGroup>
          <IconButton aria-label="Reemplazar">{icons.replace}</IconButton>
          <IconButton aria-label="Seleccionar todo">{icons.select}</IconButton>
        </ToolGroup>
      </Ribbon>

      <Body>
        <Rail>
          <RailButton aria-label="Buscar">{icons.search}</RailButton>
          <RailButton aria-label="Diapositivas" $active>{icons.slides}</RailButton>
          <RailButton aria-label="Comentarios">{icons.comment}</RailButton>
          <RailButton aria-label="Comentarios y soporte">{icons.speaker}</RailButton>
        </Rail>

        <ThumbPanel>
          <ThumbList>
            {slidesData.map(s => (
              <ThumbItem key={s.n} $selected={s.n === 7}>
                <ThumbNumber>
                  {s.label}
                  {s.n === 7 && (
                    <Icon size={8}><path d="M4 0 5.2 2.7 8 3 5.9 4.9 6.5 8 4 6.3 1.5 8 2.1 4.9 0 3l2.8-.3z" fill="#fff" stroke="none" /></Icon>
                  )}
                </ThumbNumber>
                <Thumb $bg={s.bg} $selected={s.n === 7} aria-label={`Diapositiva ${s.n}`}><MiniSlide slide={s} /></Thumb>
              </ThumbItem>
            ))}
          </ThumbList>
          <Splitter><SplitThumb><Grip /></SplitThumb></Splitter>
        </ThumbPanel>

        <Workspace>
          <Row $grow>
            <Stage>
              <SlideCanvas>
                <Selection $x={92} $y={198} $w={125} $h={41} />
                <Selection $x={744} $y={169} $w={119} $h={28} />
                <TextBox>
                  <Para $h={23}><Segment $w={262}>Observemos que</Segment><Segment $w={252}>son vectores y que</Segment><Segment>son las componentes del vector velocidad</Segment></Para>
                  <Para $h={29}> instantánea y por lo tanto son cantidades numéricas, que pueden ser positivas, negativas o nulas según cada caso.</Para>
                  <Spacer $h={27} />
                  <Para $h={41} $size={28}>Aceleración</Para>
                  <Para $h={28}>Como ya se estudió, la aceleración instantánea es igual a la derivada respecto del tiempo de la velocidad, es decir:</Para>
                  <Para $h={38} $size={28}><Segment $w={109} /><b>;</b></Para>
                  <Spacer $h={44} />
                  <Para $h={30} $size={18}>Siendo, por ejemplo</Para>
                  <Spacer $h={120} />
                  <Para $h={28} $size={18}><Segment $w={286}>  Recordemos que</Segment><Segment $w={253}>son vectores, pero</Segment><Segment>son las componentes del vector</Segment></Para>
                  <Spacer $h={6} />
                  <Para $h={20} $size={18}><Segment $w={191}>Aceleración instantánea</Segment><Segment>y por lo tanto son cantidades numéricas, que pueden ser positivas, negativas o</Segment></Para>
                  <Continuation>nulas según cada caso</Continuation>
                </TextBox>
                <Equations />
                {handles.map(([x, y]) => <Handle key={`${x}-${y}`} $x={x} $y={y} />)}
                <Overlay $x={478} $y={28} width="16" height="22" viewBox="0 0 16 22" aria-hidden="true">
                  <circle cx="8" cy="8" r="7.5" fill="#fff" />
                  <path d="M8.5 15v7" stroke="#7d8f76" />
                  <circle cx="8.5" cy="8" r="4" fill="none" stroke="#b5a9ae" /><circle cx="8.5" cy="8" r="1" fill="#c99" />
                  <path d="M2 8h4M3.5 6.5 2 8l1.5 1.5" stroke="#777" fill="none" />
                </Overlay>
                <Overlay $x={661} $y={361} width="8" height="13" viewBox="0 0 8 13" aria-hidden="true">
                  <path d="M1 .5h2.5L4 1l.5-.5H7M4 1v11M1 12.5h2.5L4 12l.5.5H7" stroke="#14281a" fill="none" />
                </Overlay>
                <SpeakerGraphic />
              </SlideCanvas>
            </Stage>
            <ScrollBar>
              <ScrollButton aria-label="Subir"><Tri /></ScrollButton>
              <ScrollThumb $h={46}><Grip /></ScrollThumb>
              <ScrollFoot><ScrollButton aria-label="Bajar"><Tri down /></ScrollButton></ScrollFoot>
            </ScrollBar>
          </Row>
          <Row>
            <Notes>Haga clic para añadir notas</Notes>
            <ScrollBar>
              <ScrollButton aria-label="Subir notas"><Tri /></ScrollButton>
              <ScrollThumb $h={5} />
              <ScrollButton aria-label="Bajar notas"><Tri down /></ScrollButton>
            </ScrollBar>
          </Row>
        </Workspace>

        <Rail $right>
          <RailButton aria-label="Ajustes de diapositiva">{icons.slideSet}</RailButton>
          <RailButton aria-label="Ajustes de forma">{icons.shapeSet}</RailButton>
          <RailButton aria-label="Ajustes de imagen">{icons.imageSet}</RailButton>
          <RailButton aria-label="Ajustes de párrafo"><Letter>¶</Letter></RailButton>
          <RailButton aria-label="Ajustes de tabla">{icons.tableSet}</RailButton>
          <RailButton aria-label="Ajustes de gráfico">{icons.chartSet}</RailButton>
          <RailButton aria-label="Ajustes de texto de arte">{icons.artSet}</RailButton>
          <RailButton aria-label="Firma">{icons.signSet}</RailButton>
        </Rail>
      </Body>

      <StatusBar>
        <IconButton aria-label="Iniciar presentación">{icons.play}</IconButton>
        <MenuArrow aria-label="Opciones de presentación"><Chevron /></MenuArrow>
        <StatusText $ml={7}>Diapositiva 7 de 11</StatusText>
        <LanguageButton>Español – Argentina<Chevron /></LanguageButton>
        <IconButton $w={17} aria-label="Idioma del documento">{icons.globe}</IconButton>
        <IconButton $w={26} aria-label="Revisión ortográfica">
          <SpellBadge>ABC<Svg width="8" height="5" viewBox="0 0 8 5" aria-hidden="true"><path d="m2 1.5 2 2L7.5 0" /></Svg></SpellBadge>
        </IconButton>
        <IconButton $w={24} aria-label="Ajustar a diapositiva">{icons.fitPage}</IconButton>
        <IconButton $w={20} aria-label="Ajustar al ancho">{icons.fitWidth}</IconButton>
        <IconButton $w={20} aria-label="Reducir">{icons.minus}</IconButton>
        <StatusText>Ampliación 114%</StatusText>
        <IconButton aria-label="Ampliar">{icons.plus}</IconButton>
      </StatusBar>
    </Shell>
  );
}
